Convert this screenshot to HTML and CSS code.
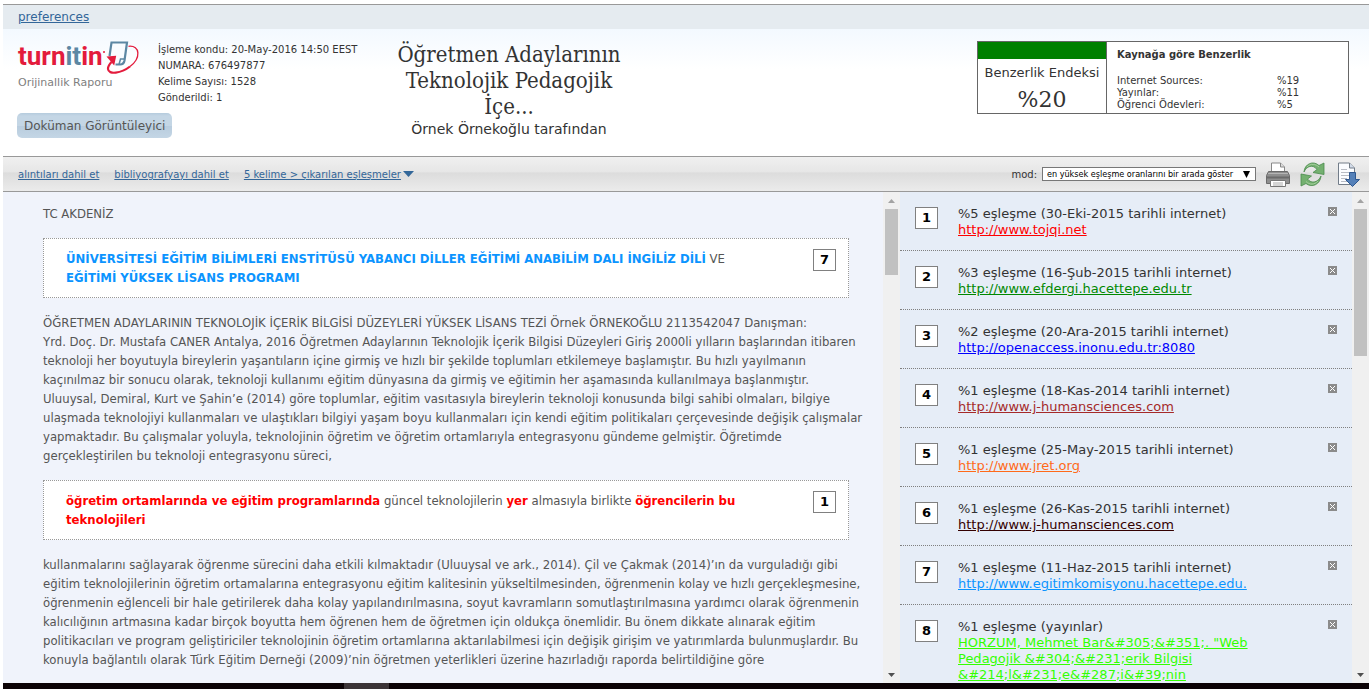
FILE: index.html
```html
<!DOCTYPE html>
<html lang="tr">
<head>
<meta charset="utf-8">
<title>Turnitin - Orijinallik Raporu</title>
<link rel="stylesheet" href="styles.css">
</head>
<body>
<nav class="prefs"><a href="#">preferences</a></nav>
<header class="header">
  <div class="brand">
    <svg class="logo" width="122" height="35" viewBox="0 0 122 35" role="img" aria-label="turnitin">
      <text class="logo-text" x="0" y="25"><tspan class="red">turn</tspan><tspan class="blue">it</tspan><tspan class="red">in</tspan></text>
      <circle cx="86" cy="12" r="1" fill="#e31b3c"/>
      <path d="M91.500 16 93.500 2.500h15.500l-2.500 18q-.7 4-4.500 4h-4.500" fill="#f9fcff" stroke="#5c87a3" stroke-width="2.200"/>
      <path d="M101 24.500l1.500-5.500h4.500" fill="none" stroke="#5c87a3" stroke-width="1.500"/>
      <path d="M110.500 6.300c12-1.300 12.500 12 1.500 20.200" fill="none" stroke="#e31b3c" stroke-width="1.300"/>
      <path d="M112 26.500c-9 7-21.500 8.500-22 2.500-.2-2 1.200-4.500 3.500-7" fill="none" stroke="#e31b3c" stroke-width="2.200"/>
      <path d="M88.500 16.500l9.700-.8-2 9.700z" fill="#e31b3c"/>
    </svg>
    <p class="brand-sub">Orijinallik Raporu</p>
    <button class="viewer" type="button">Doküman Görüntüleyici</button>
  </div>
  <p class="info">İşleme kondu: 20-May-2016 14:50 EEST<br>NUMARA: 676497877<br>Kelime Sayısı: 1528<br>Gönderildi: 1</p>
  <div class="title">
    <h1>Öğretmen Adaylarının<br>Teknolojik Pedagojik<br>İçe...</h1>
    <p>Örnek Örnekoğlu tarafından</p>
  </div>
  <section class="score">
    <div class="index"><div class="index-color"></div><p>Benzerlik Endeksi</p><strong>%20</strong></div>
    <div class="sources">
      <h2>Kaynağa göre Benzerlik</h2>
      <table>
        <tr><td>Internet Sources:</td><td>%19</td></tr>
        <tr><td>Yayınlar:</td><td>%11</td></tr>
        <tr><td>Öğrenci Ödevleri:</td><td>%5</td></tr>
      </table>
    </div>
  </section>
</header>
<div class="toolbar">
  <a href="#">alıntıları dahil et</a>
  <a href="#">bibliyografyayı dahil et</a>
  <span class="drop"><a href="#">5 kelime &gt; çıkarılan eşleşmeler</a><svg width="11" height="6" viewBox="0 0 11 6"><path d="M0 0h11L5.500 6z" fill="#336799"/></svg></span>
  <label class="mode" for="mode">mod:</label>
  <span class="select"><select id="mode"><option>en yüksek eşleşme oranlarını bir arada göster</option></select><svg width="7" height="7" viewBox="0 0 7 7"><path d="M0 0h7L3.500 7z" fill="#000"/></svg></span>
  <button class="tool" type="button" aria-label="Yazdır"><svg width="24" height="25" viewBox="0 0 24 25">
    <path d="M5.500 10V1h9l4 4v5" fill="#fff" stroke="#888"/><path d="M14.500 1v4h4" fill="#ddd" stroke="#888"/>
    <path d="M2.500 9.500h19l2 4v8H.5v-8z" fill="#8e8e8e" stroke="#6b6b6b"/><path d="M2 11.500h20" stroke="#b5b5b5"/><path d="M1 15.500h22" stroke="#6b6b6b" stroke-width="2"/>
    <path d="M4.500 18.500h15v6h-15z" fill="#fff" stroke="#777"/><path d="M7 21h10M7 23h10" stroke="#aaa"/></svg></button>
  <button class="tool" type="button" aria-label="Yenile"><svg width="25" height="25" viewBox="0 0 25 25">
    <path d="M4 10C4.500 2 13-2 19 3.500L24 1v11.500l-11-2 4-3C13 2 6.500 4 4 10z" fill="#74b070" stroke="#4a8a4c" stroke-width=".8"/>
    <path d="M21 14c-.5 8-9 12.500-15 7.500L1 24V12l10.500 2-4 3c4 5.500 11 3 13.500-3z" fill="#74b070" stroke="#4a8a4c" stroke-width=".8"/>
    <path d="M7 5c3.500-4 9-3 12 0M18 19c-3.500 4-8.500 4-12 .5" fill="none" stroke="#a5d09e"/></svg></button>
  <button class="tool" type="button" aria-label="İndir"><svg width="22" height="25" viewBox="0 0 22 25">
    <path d="M.5 1h11l5 5v16.500H.5z" fill="#fafcff" stroke="#727c88"/><path d="M11.500 1v5h5" fill="#d3dcea" stroke="#727c88"/>
    <path d="M3 7.500h6M3 10.500h9M3 13.500h9M3 16.500h6M3 19.500h6" stroke="#b8bcc4"/>
    <path d="M11.500 10.500h6v7h4l-7 7-7-7h4z" fill="#5480b8" stroke="#2d568f"/></svg></button>
</div>
<main class="main">
  <article class="doc">
    <p>TC AKDENİZ</p>
    <div class="match"><p><b class="c7">ÜNİVERSİTESİ EĞİTİM BİLİMLERİ ENSTİTÜSÜ YABANCI DİLLER EĞİTİMİ ANABİLİM DALI İNGİLİZ DİLİ</b> VE<br><b class="c7">EĞİTİMİ YÜKSEK LİSANS PROGRAMI</b></p><span class="num">7</span></div>
    <p>ÖĞRETMEN ADAYLARININ TEKNOLOJİK İÇERİK BİLGİSİ DÜZEYLERİ YÜKSEK LİSANS TEZİ Örnek ÖRNEKOĞLU 2113542047 Danışman:<br>Yrd. Doç. Dr. Mustafa CANER Antalya, 2016 Öğretmen Adaylarının Teknolojik İçerik Bilgisi Düzeyleri Giriş 2000li yılların başlarından itibaren<br>teknoloji her boyutuyla bireylerin yaşantıların içine girmiş ve hızlı bir şekilde toplumları etkilemeye başlamıştır. Bu hızlı yayılmanın<br>kaçınılmaz bir sonucu olarak, teknoloji kullanımı eğitim dünyasına da girmiş ve eğitimin her aşamasında kullanılmaya başlanmıştır.<br>Uluuysal, Demiral, Kurt ve Şahin’e (2014) göre toplumlar, eğitim vasıtasıyla bireylerin teknoloji konusunda bilgi sahibi olmaları, bilgiye<br>ulaşmada teknolojiyi kullanmaları ve ulaştıkları bilgiyi yaşam boyu kullanmaları için kendi eğitim politikaları çerçevesinde değişik çalışmalar<br>yapmaktadır. Bu çalışmalar yoluyla, teknolojinin öğretim ve öğretim ortamlarıyla entegrasyonu gündeme gelmiştir. Öğretimde<br>gerçekleştirilen bu teknoloji entegrasyonu süreci,</p>
    <div class="match"><p><b class="c1">öğretim ortamlarında ve eğitim programlarında</b> güncel teknolojilerin <b class="c1">yer</b> almasıyla birlikte <b class="c1">öğrencilerin bu<br>teknolojileri</b></p><span class="num">1</span></div>
    <p>kullanmalarını sağlayarak öğrenme sürecini daha etkili kılmaktadır (Uluuysal ve ark., 2014). Çil ve Çakmak (2014)’ın da vurguladığı gibi<br>eğitim teknolojilerinin öğretim ortamalarına entegrasyonu eğitim kalitesinin yükseltilmesinden, öğrenmenin kolay ve hızlı gerçekleşmesine,<br>öğrenmenin eğlenceli bir hale getirilerek daha kolay yapılandırılmasına, soyut kavramların somutlaştırılmasına yardımcı olarak öğrenmenin<br>kalıcılığının artmasına kadar birçok boyutta hem öğrenen hem de öğretmen için oldukça önemlidir. Bu önem dikkate alınarak eğitim<br>politikacıları ve program geliştiriciler teknolojinin öğretim ortamlarına aktarılabilmesi için değişik girişim ve yatırımlarda bulunmuşlardır. Bu<br>konuyla bağlantılı olarak Türk Eğitim Derneği (2009)’nin öğretmen yeterlikleri üzerine hazırladığı raporda belirtildiğine göre</p>
  </article>
  <div class="bar"><svg class="up" width="7" height="4" viewBox="0 0 7 4"><path d="M0 4h7L3.500 0z"/></svg><div class="thumb"></div><svg class="down" width="7" height="4" viewBox="0 0 7 4"><path d="M0 0h7L3.500 4z"/></svg></div>
  <ol class="list">
    <li><span class="num">1</span><div class="src"><p>%5 eşleşme (30-Eki-2015 tarihli internet)</p><a class="c1" href="#">http://www.tojqi.net</a></div><button class="close" type="button" aria-label="Kapat"><svg width="9" height="9" viewBox="0 0 9 9"><path d="M2 2l5 5M7 2L2 7"/></svg></button></li>
    <li><span class="num">2</span><div class="src"><p>%3 eşleşme (16-Şub-2015 tarihli internet)</p><a class="c2" href="#">http://www.efdergi.hacettepe.edu.tr</a></div><button class="close" type="button" aria-label="Kapat"><svg width="9" height="9" viewBox="0 0 9 9"><path d="M2 2l5 5M7 2L2 7"/></svg></button></li>
    <li><span class="num">3</span><div class="src"><p>%2 eşleşme (20-Ara-2015 tarihli internet)</p><a class="c3" href="#">http://openaccess.inonu.edu.tr:8080</a></div><button class="close" type="button" aria-label="Kapat"><svg width="9" height="9" viewBox="0 0 9 9"><path d="M2 2l5 5M7 2L2 7"/></svg></button></li>
    <li><span class="num">4</span><div class="src"><p>%1 eşleşme (18-Kas-2014 tarihli internet)</p><a class="c4" href="#">http://www.j-humansciences.com</a></div><button class="close" type="button" aria-label="Kapat"><svg width="9" height="9" viewBox="0 0 9 9"><path d="M2 2l5 5M7 2L2 7"/></svg></button></li>
    <li><span class="num">5</span><div class="src"><p>%1 eşleşme (25-May-2015 tarihli internet)</p><a class="c5" href="#">http://www.jret.org</a></div><button class="close" type="button" aria-label="Kapat"><svg width="9" height="9" viewBox="0 0 9 9"><path d="M2 2l5 5M7 2L2 7"/></svg></button></li>
    <li><span class="num">6</span><div class="src"><p>%1 eşleşme (26-Kas-2015 tarihli internet)</p><a class="c6" href="#">http://www.j-humansciences.com</a></div><button class="close" type="button" aria-label="Kapat"><svg width="9" height="9" viewBox="0 0 9 9"><path d="M2 2l5 5M7 2L2 7"/></svg></button></li>
    <li><span class="num">7</span><div class="src"><p>%1 eşleşme (11-Haz-2015 tarihli internet)</p><a class="c7" href="#">http://www.egitimkomisyonu.hacettepe.edu.</a></div><button class="close" type="button" aria-label="Kapat"><svg width="9" height="9" viewBox="0 0 9 9"><path d="M2 2l5 5M7 2L2 7"/></svg></button></li>
    <li><span class="num">8</span><div class="src"><p>%1 eşleşme (yayınlar)</p><a class="c8" href="#">HORZUM, Mehmet Bar&amp;#305;&amp;#351;. "Web<br>Pedagojik &amp;#304;&amp;#231;erik Bilgisi<br>&amp;#214;l&amp;#231;e&amp;#287;i&amp;#39;nin</a></div><button class="close" type="button" aria-label="Kapat"><svg width="9" height="9" viewBox="0 0 9 9"><path d="M2 2l5 5M7 2L2 7"/></svg></button></li>
  </ol>
  <div class="bar tall"><svg class="up" width="7" height="4" viewBox="0 0 7 4"><path d="M0 4h7L3.500 0z"/></svg><div class="thumb"></div><svg class="down" width="7" height="4" viewBox="0 0 7 4"><path d="M0 0h7L3.500 4z"/></svg></div>
</main>
<footer class="taskbar"><span></span></footer>
</body>
</html>
```
FILE: styles.css
```css
* { box-sizing: border-box; margin: 0; padding: 0; }
body {
  display: flex; flex-direction: column; height: 100vh; padding: 4px 0 0 3px; overflow: hidden;
  background: #fff; color: #333; font-family: Verdana, "DejaVu Sans", sans-serif; font-size: 13px;
}
button { border: 0; background: none; font: inherit; color: inherit; }
a { color: #336699; }
.prefs { height: 25px; padding: 5px 15px; border-top: 1px solid #999; background: #e5ebf0; font-size: 12px; line-height: 15px; }
.header { display: flex; align-items: flex-start; height: 127px; padding: 11px 20px 0 14px; background: linear-gradient(#f3f9ff, #fff 40px); }
.brand { width: 141px; white-space: nowrap; }
.logo { display: block; margin-left: 1px; overflow: visible; }
.logo-text { font: 700 26px Roboto, sans-serif; }
.red { fill: #e31b3c; }
.blue { fill: #5c87a3; }
.brand-sub { margin: 1px 0 0 1px; color: #808080; font-size: 11px; line-height: 14px; }
.viewer { height: 25px; margin-top: 23px; padding: 0 7px; border-radius: 5px; background: linear-gradient(#b5cbdd, #c4d6e5 3px, #c4d6e5 50%, #b8ccde 50%, #c4d6e5); color: #555; font-size: 12px; }
.info { width: 224px; padding-top: 2px; font-size: 10px; line-height: 16px; white-space: nowrap; }
.title { width: 254px; padding-top: 2px; text-align: center; white-space: nowrap; }
.title h1 { font: 400 22px/26px Georgia, "DejaVu Serif Condensed", "DejaVu Serif", serif; }
.title p { font-size: 14px; line-height: 18px; }
.score { display: flex; width: 372px; height: 73px; margin: 1px 0 0 auto; border: 1px solid #666; background: #fff; white-space: nowrap; }
.index { width: 129px; border-right: 1px solid #666; text-align: center; }
.index-color { height: 17px; background: #008000; }
.index p { padding-top: 6px; font-size: 13px; line-height: 16px; }
.index strong { display: block; margin-top: 6px; font: 400 22px/26px Georgia, "DejaVu Serif", serif; }
.sources { flex: 1; padding: 6px 10px 0; font-size: 10px; }
.sources h2 { font-size: 10px; line-height: 14px; }
.sources table { margin-top: 13px; border-collapse: collapse; line-height: 12px; }
.sources td:first-child { width: 160px; }
.toolbar {
  display: flex; align-items: center; height: 36px; padding: 0 9px 0 15px; border: solid #999; border-width: 1px 0;
  background: linear-gradient(#f0f0f0, #e6e6e6 45%, #dcdcdc 46%, #ebebeb); font-size: 10px; white-space: nowrap;
}
.toolbar > a { margin-right: 15px; }
.drop { display: flex; align-items: center; gap: 2px; }
.mode { margin-left: auto; }
.select { position: relative; margin: 0 10px 0 5px; }
.select select { display: block; width: 214px; height: 14px; padding-left: 4px; border: 1px solid #777; background: #fff; color: #000; appearance: none; font: 9px/12px Tahoma, "DejaVu Sans Condensed", sans-serif; }
.select svg { position: absolute; right: 6px; top: 4px; pointer-events: none; }
.tool { margin-right: 10px; }
.tool:nth-last-child(2) { margin-right: 13px; }
.tool:last-child { margin-right: 0; }
.tool svg { display: block; }
.main { display: flex; flex: 1; min-height: 0; }
.doc { flex: 1; padding: 12px 34px 0 40px; overflow: hidden; background: #f0f3fb; color: #555; font: 13px/19px Tahoma, "DejaVu Sans Condensed", sans-serif; white-space: nowrap; }
.match { display: flex; justify-content: space-between; margin: 15px 0; padding: 10px 12px 10px 22px; border: 1px dotted #999; background: #fff; }
.num { width: 23px; height: 22px; border: 1px solid #808080; background: #fff; color: #000; font: 700 13px/20px Verdana, "DejaVu Sans", sans-serif; text-align: center; }
.bar { display: flex; flex-direction: column; align-items: center; width: 17px; padding: 7px 2px 6px; background: #f0f0f0; }
.up { fill: #a3a3a3; }
.down { margin-top: auto; fill: #505050; }
.thumb { width: 13px; height: 66px; margin-top: 6px; background: #c1c1c1; }
.tall .thumb { height: 147px; }
.list { width: 452px; overflow: hidden; background: #e6edf7; list-style: none; }
.list li { display: flex; align-items: flex-start; min-height: 59px; padding: 13px 15px 12px; border-bottom: 1px dotted #808080; }
.list .num { margin: 2px 20px 0 0; }
.src { width: 300px; overflow: hidden; line-height: 16px; white-space: nowrap; }
.src p { line-height: 17px; }
.src a { display: block; }
.close { width: 9px; height: 9px; margin: 2px 0 0 auto; background: #8b8b8b; }
.close svg { display: block; fill: none; stroke: #fff; }
.c1 { color: #f00; }
.c2 { color: #080; }
.c3 { color: #00f; }
.c4 { color: #a52a2a; }
.c5 { color: #ff6a1a; }
.c6 { color: #300; }
.c7 { color: #0b94ff; }
.c8 { color: #3f0; }
.taskbar { height: 6px; background: #0b0205; }
.taskbar span { display: block; width: 45px; height: 6px; margin-left: 341px; background: #3b3336; }
```
